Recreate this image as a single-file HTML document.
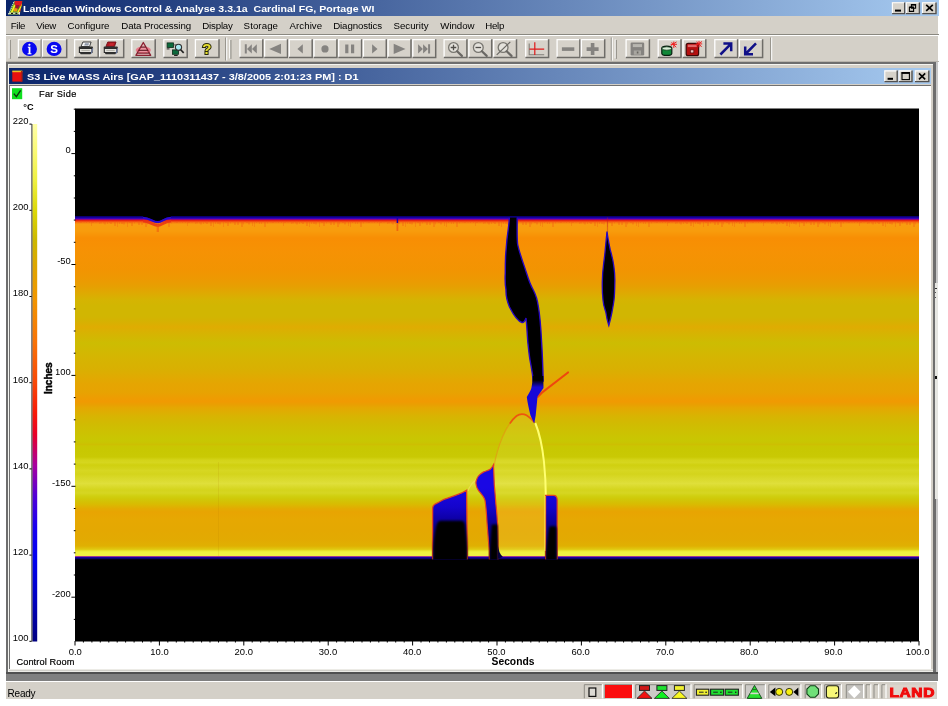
<!DOCTYPE html>
<html>
<head>
<meta charset="utf-8">
<title>Landscan Windows Control &amp; Analyse</title>
<style>
html,body{margin:0;padding:0;background:#fff;}
body{width:948px;height:706px;overflow:hidden;position:relative;font-family:"Liberation Sans",sans-serif;font-size:10px;color:#000;}
.abs{position:absolute;}
.r{position:absolute;}
#titlebar{position:absolute;left:6.2px;top:0;width:932.4px;height:15.6px;background:linear-gradient(90deg,#0a246a 0%,#a6caf0 100%);}
#titlebar .t{position:absolute;left:16.8px;top:2.3px;color:#fff;font-weight:bold;font-size:9.6px;line-height:13px;white-space:pre;transform-origin:0 0;transform:scaleX(1.1);will-change:transform;}
#menubar{will-change:transform;position:absolute;left:6.2px;top:15.6px;width:932.4px;height:46.8px;background:#d4d0c8;}
#menubar span{position:absolute;top:3px;line-height:13px;font-size:9.7px;white-space:nowrap;color:#000;}
#ctitle{position:absolute;left:8.8px;top:67.8px;width:921.8px;height:16.3px;background:linear-gradient(90deg,#0a246a 0%,#a6caf0 100%);}
#ctitle .t{position:absolute;left:17.9px;top:2.6px;color:#fff;font-weight:bold;font-size:9.6px;line-height:13px;white-space:pre;transform-origin:0 0;transform:scaleX(1.138);will-change:transform;}
#status{will-change:transform;position:absolute;left:6.2px;top:680.8px;width:930.8px;height:17.8px;background:#d4d0c8;border-top:1.2px solid #fff;box-sizing:border-box;}
</style>
</head>
<body>
<div id="page" style="position:absolute;left:0;top:0;width:948px;height:706px;filter:blur(0.35px);">
<div id="titlebar"><div class="t">Landscan Windows Control &amp; Analyse 3.3.1a  Cardinal FG, Portage WI</div></div>
<div id="menubar">
<span style="left:4.8px;letter-spacing:-0.36px">File</span>
<span style="left:30.3px;letter-spacing:-0.28px">View</span>
<span style="left:61.5px;letter-spacing:-0.00px">Configure</span>
<span style="left:115.3px;letter-spacing:-0.09px">Data Processing</span>
<span style="left:196.2px;letter-spacing:-0.17px">Display</span>
<span style="left:237.6px;letter-spacing:0.08px">Storage</span>
<span style="left:283.5px;letter-spacing:0.06px">Archive</span>
<span style="left:327.2px;letter-spacing:-0.11px">Diagnostics</span>
<span style="left:387.5px;letter-spacing:0.01px">Security</span>
<span style="left:434.3px;letter-spacing:-0.04px">Window</span>
<span style="left:479.2px;letter-spacing:-0.23px">Help</span>
</div>
<!-- toolbar separators -->
<div class="r" style="left:6.2px;top:34.2px;width:932.4px;height:1.1px;background:#8a8880"></div>
<div class="r" style="left:6.2px;top:35.3px;width:932.4px;height:1.1px;background:#fff"></div>
<!-- MDI child frame -->
<div class="r" style="left:6.2px;top:61.2px;width:932.4px;height:1.2px;background:#b8b4ac"></div>
<div class="r" style="left:6.2px;top:62.4px;width:931.6px;height:618.4px;background:#6e6e6e"></div>
<div class="r" style="left:7.8px;top:63.9px;width:925.2px;height:608.2px;background:#d4d0c8;border-top:1px solid #f4f4f0;border-left:1px solid #f4f4f0;box-sizing:border-box"></div>
<div class="r" style="left:936.4px;top:62.4px;width:1.6px;height:611px;background:#c8c8c8"></div>
<div class="r" style="left:6.2px;top:673.8px;width:931.8px;height:7px;background:#808080"></div>
<div class="r" style="left:6.2px;top:672px;width:931.8px;height:1.8px;background:#505050"></div>
<div class="r" style="left:934.8px;top:283px;width:3.2px;height:216px;background:#e6e6e2"></div>
<div class="r" style="left:934.8px;top:375.6px;width:2.3px;height:3.4px;background:#111"></div>
<div class="r" style="left:934.8px;top:288px;width:2px;height:1.4px;background:#333"></div>
<div class="r" style="left:934.8px;top:292px;width:1.6px;height:1.2px;background:#555"></div>
<div class="r" style="left:934.8px;top:297px;width:1.6px;height:1.2px;background:#555"></div>
<div id="ctitle"><div class="t">S3 Live MASS Airs [GAP_1110311437 - 3/8/2005 2:01:23 PM] : D1</div></div>
<div class="r" style="left:8.8px;top:85.4px;width:922.6px;height:583.4px;background:#fff;border-top:1.3px solid #707070;border-left:1.5px solid #707070;box-sizing:border-box"></div>
<div class="r" style="left:8.8px;top:668.6px;width:924px;height:3.4px;background:#ecebe6"></div>
<div class="r" style="left:8.8px;top:669.6px;width:924px;height:0.9px;background:#d2d0ca"></div>
<div id="status"><span class="abs" style="left:1.6px;top:5.2px;font-size:10px;line-height:13px;letter-spacing:-0.25px">Ready</span></div>

<svg id="chart" class="abs" style="left:0;top:0;" width="948" height="706" viewBox="0 0 948 706">
<defs>
<linearGradient id="band" x1="0" y1="215.6" x2="0" y2="559.8" gradientUnits="userSpaceOnUse">
<stop offset="0.0000" stop-color="#000000"/>
<stop offset="0.0029" stop-color="#0c0080"/>
<stop offset="0.0064" stop-color="#1a00a8"/>
<stop offset="0.0093" stop-color="#4800c0"/>
<stop offset="0.0116" stop-color="#a80870"/>
<stop offset="0.0139" stop-color="#e42010"/>
<stop offset="0.0174" stop-color="#f45010"/>
<stop offset="0.0209" stop-color="#f88410"/>
<stop offset="0.0259" stop-color="#f89c10"/>
<stop offset="0.0447" stop-color="#f89c0c"/>
<stop offset="0.0651" stop-color="#f88e04"/>
<stop offset="0.1058" stop-color="#f69204"/>
<stop offset="0.1580" stop-color="#f29402"/>
<stop offset="0.1813" stop-color="#ee9802"/>
<stop offset="0.2074" stop-color="#e6a002"/>
<stop offset="0.2307" stop-color="#dcac02"/>
<stop offset="0.2452" stop-color="#d5b402"/>
<stop offset="0.2626" stop-color="#d1b602"/>
<stop offset="0.2917" stop-color="#d1b602"/>
<stop offset="0.3062" stop-color="#d5b202"/>
<stop offset="0.3236" stop-color="#dfac02"/>
<stop offset="0.3382" stop-color="#d8b202"/>
<stop offset="0.3701" stop-color="#cdbc02"/>
<stop offset="0.3963" stop-color="#d2b802"/>
<stop offset="0.4195" stop-color="#d6b402"/>
<stop offset="0.4457" stop-color="#d9b002"/>
<stop offset="0.4689" stop-color="#e0aa02"/>
<stop offset="0.4893" stop-color="#e5a502"/>
<stop offset="0.5125" stop-color="#e7a302"/>
<stop offset="0.5314" stop-color="#ee9c02"/>
<stop offset="0.5401" stop-color="#f09a02"/>
<stop offset="0.5488" stop-color="#ea9f02"/>
<stop offset="0.5590" stop-color="#e4a802"/>
<stop offset="0.5822" stop-color="#d8b402"/>
<stop offset="0.6084" stop-color="#d0bc02"/>
<stop offset="0.6316" stop-color="#ccc202"/>
<stop offset="0.6549" stop-color="#c8c702"/>
<stop offset="0.6607" stop-color="#cac402"/>
<stop offset="0.6650" stop-color="#cdbf02"/>
<stop offset="0.6694" stop-color="#cac602"/>
<stop offset="0.6810" stop-color="#c8c802"/>
<stop offset="0.7013" stop-color="#c9c904"/>
<stop offset="0.7101" stop-color="#d4d418"/>
<stop offset="0.7173" stop-color="#d6d61e"/>
<stop offset="0.7246" stop-color="#d0d010"/>
<stop offset="0.7333" stop-color="#d3d318"/>
<stop offset="0.7406" stop-color="#d7d722"/>
<stop offset="0.7507" stop-color="#d4d41c"/>
<stop offset="0.7623" stop-color="#d9d92a"/>
<stop offset="0.7711" stop-color="#dcdc32"/>
<stop offset="0.7783" stop-color="#dfdf3a"/>
<stop offset="0.7870" stop-color="#dada2c"/>
<stop offset="0.7972" stop-color="#d4d41c"/>
<stop offset="0.8059" stop-color="#d6d622"/>
<stop offset="0.8146" stop-color="#d0d010"/>
<stop offset="0.8234" stop-color="#d0c808"/>
<stop offset="0.8379" stop-color="#d8bc02"/>
<stop offset="0.8524" stop-color="#e4aa02"/>
<stop offset="0.8611" stop-color="#e8a402"/>
<stop offset="0.8844" stop-color="#e6a802"/>
<stop offset="0.9134" stop-color="#e4a802"/>
<stop offset="0.9425" stop-color="#e2aa02"/>
<stop offset="0.9599" stop-color="#e0b002"/>
<stop offset="0.9695" stop-color="#e0c810"/>
<stop offset="0.9739" stop-color="#e8e430"/>
<stop offset="0.9773" stop-color="#f0f040"/>
<stop offset="0.9878" stop-color="#f0f044"/>
<stop offset="0.9904" stop-color="#a03890"/>
<stop offset="0.9933" stop-color="#1800a0"/>
<stop offset="0.9971" stop-color="#0c0060"/>
<stop offset="1.0000" stop-color="#000000"/>
</linearGradient>
<linearGradient id="tail" x1="0" y1="376" x2="0" y2="392" gradientUnits="userSpaceOnUse"><stop offset="0" stop-color="#000"/><stop offset="0.25" stop-color="#000"/><stop offset="0.7" stop-color="#1608d8"/></linearGradient>
<filter id="soft" x="-10%" y="-10%" width="120%" height="120%"><feGaussianBlur stdDeviation="0.9"/></filter>
<pattern id="teeth" x="75" y="221" width="96" height="16" patternUnits="userSpaceOnUse"><g fill="#f05010" opacity="0.3"><rect x="0" y="0" width="1" height="2.5"/><rect x="3" y="0" width="2" height="1.5"/><rect x="5" y="0" width="2" height="2"/><rect x="8" y="0" width="2" height="1.5"/><rect x="11" y="0" width="1" height="2"/><rect x="14" y="0" width="1" height="2"/><rect x="16" y="0" width="1" height="5"/><rect x="17" y="0" width="2" height="2"/><rect x="20" y="0" width="2" height="1.5"/><rect x="24" y="0" width="1" height="3"/><rect x="25" y="0" width="2" height="2.5"/><rect x="28" y="0" width="1" height="2.5"/><rect x="29" y="0" width="2" height="3.5"/><rect x="32" y="0" width="1" height="3"/><rect x="34" y="0" width="1" height="2"/><rect x="35" y="0" width="2" height="3"/><rect x="39" y="0" width="2" height="5"/><rect x="42" y="0" width="1" height="6"/><rect x="44" y="0" width="1" height="3"/><rect x="46" y="0" width="2" height="3"/><rect x="48" y="0" width="2" height="3.5"/><rect x="52" y="0" width="1" height="6"/><rect x="54" y="0" width="2" height="2"/><rect x="56" y="0" width="2" height="5"/><rect x="59" y="0" width="1" height="2.5"/><rect x="62" y="0" width="1" height="1.5"/><rect x="63" y="0" width="2" height="4"/><rect x="66" y="0" width="2" height="4"/><rect x="70" y="0" width="2" height="6"/><rect x="72" y="0" width="1" height="3.5"/><rect x="75" y="0" width="2" height="2"/><rect x="77" y="0" width="2" height="3.5"/><rect x="81" y="0" width="1" height="5"/><rect x="83" y="0" width="1" height="6"/><rect x="85" y="0" width="1" height="2"/><rect x="88" y="0" width="1" height="3"/><rect x="90" y="0" width="1" height="3"/><rect x="93" y="0" width="1" height="6"/><rect x="94" y="0" width="1" height="6"/></g></pattern>
<clipPath id="bandclip"><rect x="75" y="217.6" width="844" height="341.6"/></clipPath>
<linearGradient id="cbar" x1="0" y1="124" x2="0" y2="641.5" gradientUnits="userSpaceOnUse"><stop offset="0" stop-color="#ffffa8"/><stop offset="0.05" stop-color="#fafa78"/><stop offset="0.11" stop-color="#eef040"/><stop offset="0.167" stop-color="#dcd808"/><stop offset="0.225" stop-color="#ccb800"/><stop offset="0.28" stop-color="#e0a400"/><stop offset="0.333" stop-color="#f09800"/><stop offset="0.42" stop-color="#f87408"/><stop offset="0.5" stop-color="#f84808"/><stop offset="0.56" stop-color="#f81808"/><stop offset="0.6" stop-color="#e80028"/><stop offset="0.66" stop-color="#a800a0"/><stop offset="0.72" stop-color="#5000d8"/><stop offset="0.78" stop-color="#1800f0"/><stop offset="0.84" stop-color="#0000f0"/><stop offset="0.92" stop-color="#0000c0"/><stop offset="1" stop-color="#000080"/></linearGradient>
<linearGradient id="blk" x1="0" y1="488" x2="0" y2="526" gradientUnits="userSpaceOnUse"><stop offset="0" stop-color="#1a08e4"/><stop offset="0.5" stop-color="#1404cc"/><stop offset="0.8" stop-color="#0e00a8"/><stop offset="1" stop-color="#0a0090"/></linearGradient>
</defs>
<rect x="75" y="108.5" width="844" height="533" fill="#000"/>
<rect x="75" y="215.6" width="844" height="344.2" fill="url(#band)"/>
<rect x="75" y="221" width="844" height="7.5" fill="url(#teeth)"/>
<g id="notch">
<path d="M143,221 C150,221 152.5,225.4 157.8,225.4 C162.5,225.4 164,221 171,221" fill="none" stroke="#e83014" stroke-width="3" opacity="0.8"/>
<path d="M157.8,225 V232" stroke="#f05810" stroke-width="2.4" opacity="0.55"/>
<path d="M143,215 H171 V217 C164,217 162.5,221.4 157.8,221.4 C152.5,221.4 150,217 143,217 Z" fill="#000"/>
<path d="M143,217.8 C150,217.8 152.5,222.2 157.8,222.2 C162.5,222.2 164,217.8 171,217.8" fill="none" stroke="#2808d0" stroke-width="2.2"/>
</g>
<path d="M218.5,462V556" stroke="#b07800" stroke-width="1" opacity="0.12"/>
<!--SHAPES-->
<g id="shapes" clip-path="url(#bandclip)">
<!-- notch near x=158 and hairlines -->
<path d="M397.4,222 L397.4,231" stroke="#e84010" stroke-width="1.8" opacity="0.55"/><path d="M397.4,217 L397.4,223" stroke="#1c00a8" stroke-width="1.5"/>
<path d="M607.5,217 L607.5,232" stroke="#c02020" stroke-width="1.2" opacity="0.4"/>
<!-- dome -->
<path d="M493.5,466 C495,456 498,446 501,439 C505,430 510,421 516,416.5 C520,413.6 524,413.5 527,415.5 C530,417.5 532,419.5 535,423 C539,432 542.5,448 544,462 C545.3,475 545.8,485 545.8,495 L545.8,551 L498,551 C497.3,525 496.5,510 496,500 C495.3,488 494.3,476 493.5,466 Z" fill="#fff8a0" opacity="0.10"/>
<path d="M534.5,422.5 C531,418.5 528.5,416.5 526.5,415.3 C523,413.4 519.5,413.8 516.5,416 C514,418 511.8,420.6 509.8,423.6" fill="none" stroke="#f04a10" stroke-width="1.7" opacity="0.9"/>
<path d="M509.8,423.6 C507,427.6 504.6,432 502.5,437 C499,445 496,455 494,466" fill="none" stroke="#f07010" stroke-width="1.2" opacity="0.4"/>
<path d="M535.3,423 C539,432 542.5,448 544,462 C545.3,475 545.8,485 545.8,496" fill="none" stroke="#ffff70" stroke-width="2"/>
<!-- faint second dome outline -->
<path d="M468,491 C469.5,486 472.5,482.5 476.5,479.5" fill="none" stroke="#f0e060" stroke-width="1.2" opacity="0.7"/>
<!-- red streak -->
<path d="M568,372.5 L541.5,393 L537.8,396.8" fill="none" stroke="#f03c10" stroke-width="2.2" stroke-linecap="round" opacity="0.9"/>
<!-- blob 1 black -->
<path d="M509.5,215 L517.2,215 C517.2,228 516.8,238 517.6,244 C519,252 524,265 526.5,273 C529,281 531,286 533.3,290 C536,295 537.6,301 538.4,307 C540,316 541,330 541.6,342 C542.3,353 542.8,366 543.2,381 L533.2,381 C532.5,372 531,366 530,360 C529,354 528.5,348 527.8,342 C527.2,334 526.8,325 526,318 C525,321 523.5,322.8 522,322.5 C518,321.5 513,314 509.5,307 C507,301 505.8,296 506,290 C505,284 505,278 505.3,273 C505.3,267 505.4,261 505.6,256 C506,250 506.6,244 507,239 C508,231 509.2,224 509.5,215 Z" fill="#000" stroke="#2808c0" stroke-width="1.4"/>
<!-- blob 1 blue tail -->
<path d="M532.8,376 L543.3,376 L543.5,388 L537.5,396.5 C537,403 536.2,410 535.7,415.5 L534.2,423.5 L530.5,415.5 C529,409 527.5,403 526.8,397 C529,393 531,390 531.4,388 C532,385 532.5,381 532.8,376 Z" fill="url(#tail)"/>
<!-- lens -->
<path d="M607,231.5 C607.8,238 609,244 610.3,250 C612,256 613.2,261 613.8,266 C614.8,273 615,278 614.8,283 C614.7,290 614.6,295 614,300 C613.2,306 612.5,309 612,312 C611,317 609.8,322 608.8,325.5 C607.6,322 606.5,317 605.8,312 C604.5,308 603.3,305 603,300 C602.3,294 602.2,288 602.3,282 C602.4,276 602.8,270 603.5,265 C604.2,259 604.8,255 605.2,250 C605.8,244 606.4,238 607,231.5 Z" fill="#000" stroke="#2808c0" stroke-width="1.3"/>
<!-- block A -->
<path d="M432.6,563 L432.6,509 C432.6,505.5 434,504.3 436,503.6 C440,501.6 442,500.2 444,499.3 C448,497.8 452,496.6 456,495.2 C460,493.8 464,492 466.6,490.2 L467.4,563 Z" fill="url(#blk)" stroke="#e04028" stroke-width="1.3"/>
<path d="M433.2,563 L433.2,548 C433.6,540 435,530 436.6,525 C437.4,522 438.6,520.8 441,520.8 L461,520.8 C463.4,520.8 464.6,522 465,525 C466,532 466.8,540 467.2,548 L467.2,563 Z" fill="#000" filter="url(#soft)"/>
<!-- block B -->
<path d="M493.5,464.8 C492,467.6 491,468.8 490,469.4 C487.5,470.6 486,471 484.3,471.6 C482.6,472.4 481.4,473.2 480,474.4 C478.4,475.8 477.4,477.2 476.9,478.8 C476.2,480.4 475.9,481.6 475.9,483 C476,484.6 476.4,486 476.9,487.4 C477.8,489.4 478.8,491 480,492.4 C481.2,494 482.4,495.4 483.4,496.8 C484.2,498 484.7,499.2 485,500.5 C486,507 486.6,515 487,522.7 C487.5,529 488,535 488.4,540.8 L489.3,550.8 L489.4,563 L498,563 L498,540.8 C497.9,534 497.7,528 497.5,522.7 C497,515 496.5,509 495.9,504 L495.2,495 L494.3,485 Z" fill="url(#blk)" stroke="#e04028" stroke-width="1.2"/>
<path d="M491.8,524.6 L497.5,524.6 L498,548 L498,563 L489.5,563 L489.7,552 L490.3,541 L491,532 Z" fill="#000" filter="url(#soft)"/>
<path d="M497.8,545 C498.6,550.5 500,554.6 502.8,556.8 L497.8,559 Z" fill="#06023c"/>
<!-- block C -->
<path d="M545.6,563 L545.6,495.3 L553.4,495.3 C556,495.3 557.2,497.4 557.2,500 L557.2,563 Z" fill="url(#blk)" stroke="#e04028" stroke-width="1.2"/>
<path d="M546,563 L546,552 C546.6,545 547.6,536 548.6,530 C549,527.2 549.6,526.2 551,526.2 L554.6,526.2 C556,526.2 556.6,527.2 556.6,530 L556.8,563 Z" fill="#000" filter="url(#soft)"/>
<path d="M545,496 L544.8,551" stroke="#f8f060" stroke-width="1.2" opacity="0.75"/>
</g>
<!--/SHAPES-->
<!--AXES-->
<g id="axes" font-family="Liberation Sans, sans-serif" font-size="9.45" fill="#000">
<rect x="32.4" y="124" width="4.8" height="517.5" fill="url(#cbar)"/>
<rect x="31.4" y="124" width="1" height="517.5" fill="#303030"/>
<rect x="29.4" y="123.6" width="2.2" height="1" fill="#000"/>
<text x="28.6" y="124.0" text-anchor="end">220</text>
<rect x="29.4" y="209.8" width="2.2" height="1" fill="#000"/>
<text x="28.6" y="210.2" text-anchor="end">200</text>
<rect x="29.4" y="296.0" width="2.2" height="1" fill="#000"/>
<text x="28.6" y="296.4" text-anchor="end">180</text>
<rect x="29.4" y="382.2" width="2.2" height="1" fill="#000"/>
<text x="28.6" y="382.6" text-anchor="end">160</text>
<rect x="29.4" y="468.4" width="2.2" height="1" fill="#000"/>
<text x="28.6" y="468.8" text-anchor="end">140</text>
<rect x="29.4" y="554.6" width="2.2" height="1" fill="#000"/>
<text x="28.6" y="555.0" text-anchor="end">120</text>
<rect x="29.4" y="640.8" width="2.2" height="1" fill="#000"/>
<text x="28.6" y="641.2" text-anchor="end">100</text>
<path d="M73.8,109.2H75.5M73.8,131.4H75.5M71.4,153.6H75.5M73.8,175.8H75.5M73.8,198.0H75.5M73.8,220.1H75.5M73.8,242.3H75.5M71.4,264.5H75.5M73.8,286.7H75.5M73.8,308.9H75.5M73.8,331.0H75.5M73.8,353.2H75.5M71.4,375.4H75.5M73.8,397.6H75.5M73.8,419.8H75.5M73.8,441.9H75.5M73.8,464.1H75.5M71.4,486.3H75.5M73.8,508.5H75.5M73.8,530.7H75.5M73.8,552.8H75.5M73.8,575.0H75.5M71.4,597.2H75.5M73.8,619.4H75.5" stroke="#000" stroke-width="1" fill="none"/>
<text x="70.8" y="153.4" text-anchor="end">0</text>
<text x="70.8" y="264.3" text-anchor="end">-50</text>
<text x="70.8" y="375.2" text-anchor="end">-100</text>
<text x="70.8" y="486.1" text-anchor="end">-150</text>
<text x="70.8" y="597.0" text-anchor="end">-200</text>
<path d="M74.5,641H75.5V645.4H74.5ZM82.9,641H83.9V642.5H82.9ZM91.4,641H92.4V642.5H91.4ZM99.8,641H100.8V642.5H99.8ZM108.3,641H109.3V642.5H108.3ZM116.7,641H117.7V642.5H116.7ZM125.1,641H126.1V642.5H125.1ZM133.6,641H134.6V642.5H133.6ZM142.0,641H143.0V642.5H142.0ZM150.5,641H151.5V642.5H150.5ZM158.9,641H159.9V645.4H158.9ZM167.3,641H168.3V642.5H167.3ZM175.8,641H176.8V642.5H175.8ZM184.2,641H185.2V642.5H184.2ZM192.7,641H193.7V642.5H192.7ZM201.1,641H202.1V642.5H201.1ZM209.5,641H210.5V642.5H209.5ZM218.0,641H219.0V642.5H218.0ZM226.4,641H227.4V642.5H226.4ZM234.9,641H235.9V642.5H234.9ZM243.3,641H244.3V645.4H243.3ZM251.7,641H252.7V642.5H251.7ZM260.2,641H261.2V642.5H260.2ZM268.6,641H269.6V642.5H268.6ZM277.1,641H278.1V642.5H277.1ZM285.5,641H286.5V642.5H285.5ZM293.9,641H294.9V642.5H293.9ZM302.4,641H303.4V642.5H302.4ZM310.8,641H311.8V642.5H310.8ZM319.3,641H320.3V642.5H319.3ZM327.7,641H328.7V645.4H327.7ZM336.1,641H337.1V642.5H336.1ZM344.6,641H345.6V642.5H344.6ZM353.0,641H354.0V642.5H353.0ZM361.5,641H362.5V642.5H361.5ZM369.9,641H370.9V642.5H369.9ZM378.3,641H379.3V642.5H378.3ZM386.8,641H387.8V642.5H386.8ZM395.2,641H396.2V642.5H395.2ZM403.7,641H404.7V642.5H403.7ZM412.1,641H413.1V645.4H412.1ZM420.5,641H421.5V642.5H420.5ZM429.0,641H430.0V642.5H429.0ZM437.4,641H438.4V642.5H437.4ZM445.9,641H446.9V642.5H445.9ZM454.3,641H455.3V642.5H454.3ZM462.7,641H463.7V642.5H462.7ZM471.2,641H472.2V642.5H471.2ZM479.6,641H480.6V642.5H479.6ZM488.1,641H489.1V642.5H488.1ZM496.5,641H497.5V645.4H496.5ZM504.9,641H505.9V642.5H504.9ZM513.4,641H514.4V642.5H513.4ZM521.8,641H522.8V642.5H521.8ZM530.3,641H531.3V642.5H530.3ZM538.7,641H539.7V642.5H538.7ZM547.1,641H548.1V642.5H547.1ZM555.6,641H556.6V642.5H555.6ZM564.0,641H565.0V642.5H564.0ZM572.5,641H573.5V642.5H572.5ZM580.9,641H581.9V645.4H580.9ZM589.3,641H590.3V642.5H589.3ZM597.8,641H598.8V642.5H597.8ZM606.2,641H607.2V642.5H606.2ZM614.7,641H615.7V642.5H614.7ZM623.1,641H624.1V642.5H623.1ZM631.5,641H632.5V642.5H631.5ZM640.0,641H641.0V642.5H640.0ZM648.4,641H649.4V642.5H648.4ZM656.9,641H657.9V642.5H656.9ZM665.3,641H666.3V645.4H665.3ZM673.7,641H674.7V642.5H673.7ZM682.2,641H683.2V642.5H682.2ZM690.6,641H691.6V642.5H690.6ZM699.1,641H700.1V642.5H699.1ZM707.5,641H708.5V642.5H707.5ZM715.9,641H716.9V642.5H715.9ZM724.4,641H725.4V642.5H724.4ZM732.8,641H733.8V642.5H732.8ZM741.3,641H742.3V642.5H741.3ZM749.7,641H750.7V645.4H749.7ZM758.1,641H759.1V642.5H758.1ZM766.6,641H767.6V642.5H766.6ZM775.0,641H776.0V642.5H775.0ZM783.5,641H784.5V642.5H783.5ZM791.9,641H792.9V642.5H791.9ZM800.3,641H801.3V642.5H800.3ZM808.8,641H809.8V642.5H808.8ZM817.2,641H818.2V642.5H817.2ZM825.7,641H826.7V642.5H825.7ZM834.1,641H835.1V645.4H834.1ZM842.5,641H843.5V642.5H842.5ZM851.0,641H852.0V642.5H851.0ZM859.4,641H860.4V642.5H859.4ZM867.9,641H868.9V642.5H867.9ZM876.3,641H877.3V642.5H876.3ZM884.7,641H885.7V642.5H884.7ZM893.2,641H894.2V642.5H893.2ZM901.6,641H902.6V642.5H901.6ZM910.1,641H911.1V642.5H910.1ZM918.5,641H919.5V645.4H918.5Z" fill="#000"/>
<text x="75.3" y="654.7" text-anchor="middle">0.0</text>
<text x="159.5" y="654.7" text-anchor="middle">10.0</text>
<text x="243.8" y="654.7" text-anchor="middle">20.0</text>
<text x="328.0" y="654.7" text-anchor="middle">30.0</text>
<text x="412.2" y="654.7" text-anchor="middle">40.0</text>
<text x="496.4" y="654.7" text-anchor="middle">50.0</text>
<text x="580.7" y="654.7" text-anchor="middle">60.0</text>
<text x="664.9" y="654.7" text-anchor="middle">70.0</text>
<text x="749.1" y="654.7" text-anchor="middle">80.0</text>
<text x="833.4" y="654.7" text-anchor="middle">90.0</text>
<text x="917.6" y="654.7" text-anchor="middle">100.0</text>
<text x="513" y="665.2" text-anchor="middle" font-weight="bold" font-size="10.3">Seconds</text>
<rect x="43" y="361" width="12.8" height="34" fill="#fff"/>
<text transform="translate(51.7,378.2) rotate(-90)" text-anchor="middle" font-weight="bold" font-size="10" stroke="#000" stroke-width="0.45">Inches</text>
<text x="23.3" y="109.7" font-weight="bold" font-size="9.2">°C</text>
<text x="38.9" y="96.6" font-size="9.2" letter-spacing="0.38" stroke="#000" stroke-width="0.2">Far Side</text>
<text x="16.4" y="664.6" font-size="9.2" letter-spacing="0.12" stroke="#000" stroke-width="0.2">Control Room</text>
</g>
<!--/AXES-->
<!--TOOLBAR-->
<g id="toolbar" font-family="Liberation Sans, sans-serif">
<rect x="8.6" y="39.5" width="1.2" height="18.9" fill="#fff"/><rect x="9.8" y="40.0" width="1" height="18.9" fill="#8a8880"/>
<rect x="17.8" y="39.0" width="24.3" height="19.2" fill="#d6d2ca"/><path d="M18.4,57.6V39.6H41.5" fill="none" stroke="#fff" stroke-width="1.3"/><path d="M41.4,39.3V57.5H18.1" fill="none" stroke="#6e6c68" stroke-width="1.5"/>
<rect x="41.8" y="39.0" width="25.6" height="19.2" fill="#d6d2ca"/><path d="M42.4,57.6V39.6H66.8" fill="none" stroke="#fff" stroke-width="1.3"/><path d="M66.7,39.3V57.5H42.1" fill="none" stroke="#6e6c68" stroke-width="1.5"/>
<rect x="74.0" y="39.0" width="24.9" height="19.2" fill="#d6d2ca"/><path d="M74.6,57.6V39.6H98.3" fill="none" stroke="#fff" stroke-width="1.3"/><path d="M98.2,39.3V57.5H74.3" fill="none" stroke="#6e6c68" stroke-width="1.5"/>
<rect x="99.0" y="39.0" width="25.4" height="19.2" fill="#d6d2ca"/><path d="M99.6,57.6V39.6H123.8" fill="none" stroke="#fff" stroke-width="1.3"/><path d="M123.7,39.3V57.5H99.3" fill="none" stroke="#6e6c68" stroke-width="1.5"/>
<rect x="131.2" y="39.0" width="24.7" height="19.2" fill="#d6d2ca"/><path d="M131.8,57.6V39.6H155.3" fill="none" stroke="#fff" stroke-width="1.3"/><path d="M155.2,39.3V57.5H131.5" fill="none" stroke="#6e6c68" stroke-width="1.5"/>
<rect x="163.2" y="39.0" width="24.7" height="19.2" fill="#d6d2ca"/><path d="M163.8,57.6V39.6H187.3" fill="none" stroke="#fff" stroke-width="1.3"/><path d="M187.2,39.3V57.5H163.5" fill="none" stroke="#6e6c68" stroke-width="1.5"/>
<rect x="194.8" y="39.0" width="24.9" height="19.2" fill="#d6d2ca"/><path d="M195.4,57.6V39.6H219.1" fill="none" stroke="#fff" stroke-width="1.3"/><path d="M219.0,39.3V57.5H195.1" fill="none" stroke="#6e6c68" stroke-width="1.5"/>
<rect x="225.2" y="37.5" width="1" height="23.0" fill="#8a8880"/><rect x="226.2" y="37.5" width="1" height="23.0" fill="#fff"/>
<rect x="229.2" y="39.5" width="1.2" height="18.9" fill="#fff"/><rect x="230.4" y="40.0" width="1" height="18.9" fill="#8a8880"/>
<rect x="239.3" y="39.0" width="24.2" height="19.2" fill="#d6d2ca"/><path d="M239.9,57.6V39.6H262.9" fill="none" stroke="#fff" stroke-width="1.3"/><path d="M262.8,39.3V57.5H239.6" fill="none" stroke="#6e6c68" stroke-width="1.5"/>
<rect x="264.0" y="39.0" width="24.2" height="19.2" fill="#d6d2ca"/><path d="M264.6,57.6V39.6H287.6" fill="none" stroke="#fff" stroke-width="1.3"/><path d="M287.5,39.3V57.5H264.3" fill="none" stroke="#6e6c68" stroke-width="1.5"/>
<rect x="288.7" y="39.0" width="24.2" height="19.2" fill="#d6d2ca"/><path d="M289.3,57.6V39.6H312.3" fill="none" stroke="#fff" stroke-width="1.3"/><path d="M312.2,39.3V57.5H289.0" fill="none" stroke="#6e6c68" stroke-width="1.5"/>
<rect x="313.4" y="39.0" width="24.2" height="19.2" fill="#d6d2ca"/><path d="M314.0,57.6V39.6H337.0" fill="none" stroke="#fff" stroke-width="1.3"/><path d="M336.9,39.3V57.5H313.7" fill="none" stroke="#6e6c68" stroke-width="1.5"/>
<rect x="338.1" y="39.0" width="24.2" height="19.2" fill="#d6d2ca"/><path d="M338.7,57.6V39.6H361.7" fill="none" stroke="#fff" stroke-width="1.3"/><path d="M361.6,39.3V57.5H338.4" fill="none" stroke="#6e6c68" stroke-width="1.5"/>
<rect x="362.8" y="39.0" width="24.2" height="19.2" fill="#d6d2ca"/><path d="M363.4,57.6V39.6H386.4" fill="none" stroke="#fff" stroke-width="1.3"/><path d="M386.3,39.3V57.5H363.1" fill="none" stroke="#6e6c68" stroke-width="1.5"/>
<rect x="387.5" y="39.0" width="24.2" height="19.2" fill="#d6d2ca"/><path d="M388.1,57.6V39.6H411.1" fill="none" stroke="#fff" stroke-width="1.3"/><path d="M411.0,39.3V57.5H387.8" fill="none" stroke="#6e6c68" stroke-width="1.5"/>
<rect x="412.2" y="39.0" width="24.2" height="19.2" fill="#d6d2ca"/><path d="M412.8,57.6V39.6H435.8" fill="none" stroke="#fff" stroke-width="1.3"/><path d="M435.7,39.3V57.5H412.5" fill="none" stroke="#6e6c68" stroke-width="1.5"/>
<rect x="443.5" y="39.0" width="24.1" height="19.2" fill="#d6d2ca"/><path d="M444.1,57.6V39.6H467.0" fill="none" stroke="#fff" stroke-width="1.3"/><path d="M466.9,39.3V57.5H443.8" fill="none" stroke="#6e6c68" stroke-width="1.5"/>
<rect x="468.3" y="39.0" width="24.1" height="19.2" fill="#d6d2ca"/><path d="M468.9,57.6V39.6H491.8" fill="none" stroke="#fff" stroke-width="1.3"/><path d="M491.7,39.3V57.5H468.6" fill="none" stroke="#6e6c68" stroke-width="1.5"/>
<rect x="493.1" y="39.0" width="24.1" height="19.2" fill="#d6d2ca"/><path d="M493.7,57.6V39.6H516.6" fill="none" stroke="#fff" stroke-width="1.3"/><path d="M516.5,39.3V57.5H493.4" fill="none" stroke="#6e6c68" stroke-width="1.5"/>
<rect x="525.1" y="39.0" width="24.2" height="19.2" fill="#d6d2ca"/><path d="M525.7,57.6V39.6H548.7" fill="none" stroke="#fff" stroke-width="1.3"/><path d="M548.6,39.3V57.5H525.4" fill="none" stroke="#6e6c68" stroke-width="1.5"/>
<rect x="556.5" y="39.0" width="24.1" height="19.2" fill="#d6d2ca"/><path d="M557.1,57.6V39.6H580.0" fill="none" stroke="#fff" stroke-width="1.3"/><path d="M579.9,39.3V57.5H556.8" fill="none" stroke="#6e6c68" stroke-width="1.5"/>
<rect x="580.8" y="39.0" width="24.6" height="19.2" fill="#d6d2ca"/><path d="M581.4,57.6V39.6H604.8" fill="none" stroke="#fff" stroke-width="1.3"/><path d="M604.7,39.3V57.5H581.1" fill="none" stroke="#6e6c68" stroke-width="1.5"/>
<rect x="610.8" y="37.5" width="1" height="23.0" fill="#8a8880"/><rect x="611.8" y="37.5" width="1" height="23.0" fill="#fff"/>
<rect x="614.6" y="39.5" width="1.2" height="18.9" fill="#fff"/><rect x="615.8" y="40.0" width="1" height="18.9" fill="#8a8880"/>
<rect x="625.5" y="39.0" width="24.6" height="19.2" fill="#d6d2ca"/><path d="M626.1,57.6V39.6H649.5" fill="none" stroke="#fff" stroke-width="1.3"/><path d="M649.4,39.3V57.5H625.8" fill="none" stroke="#6e6c68" stroke-width="1.5"/>
<rect x="657.6" y="39.0" width="24.1" height="19.2" fill="#d6d2ca"/><path d="M658.2,57.6V39.6H681.1" fill="none" stroke="#fff" stroke-width="1.3"/><path d="M681.0,39.3V57.5H657.9" fill="none" stroke="#6e6c68" stroke-width="1.5"/>
<rect x="682.4" y="39.0" width="24.1" height="19.2" fill="#d6d2ca"/><path d="M683.0,57.6V39.6H705.9" fill="none" stroke="#fff" stroke-width="1.3"/><path d="M705.8,39.3V57.5H682.7" fill="none" stroke="#6e6c68" stroke-width="1.5"/>
<rect x="714.2" y="39.0" width="24.1" height="19.2" fill="#d6d2ca"/><path d="M714.8,57.6V39.6H737.7" fill="none" stroke="#fff" stroke-width="1.3"/><path d="M737.6,39.3V57.5H714.5" fill="none" stroke="#6e6c68" stroke-width="1.5"/>
<rect x="738.8" y="39.0" width="24.5" height="19.2" fill="#d6d2ca"/><path d="M739.4,57.6V39.6H762.7" fill="none" stroke="#fff" stroke-width="1.3"/><path d="M762.6,39.3V57.5H739.1" fill="none" stroke="#6e6c68" stroke-width="1.5"/>
<rect x="770.2" y="37.5" width="1" height="23.0" fill="#8a8880"/><rect x="771.2" y="37.5" width="1" height="23.0" fill="#fff"/>
<ellipse cx="29.5" cy="48.9" rx="7.5" ry="7.1" fill="#0808f0"/>
<text x="29.5" y="53.5" text-anchor="middle" font-family="Liberation Serif, serif" font-size="14.5" fill="#fff" stroke="#fff" stroke-width="0.35">i</text>
<ellipse cx="54.1" cy="48.9" rx="7.5" ry="7.1" fill="#0808f0"/>
<text x="54.1" y="53.0" text-anchor="middle" font-weight="bold" font-size="11.5" fill="#fff">S</text>
<g transform="translate(85.8,48.9)"><path d="M-2.9,-6.9H5.3L3.8,-2.4H-4.8Z" fill="#f4f4f4" stroke="#303030" stroke-width="0.9"/><path d="M-0.8,-5.6H3.2L2.6,-3.4H-1.6Z" fill="#9098a8"/><path d="M-6.4,-0.4V3.6H6.2V-0.4Z" fill="#e4e2dc" stroke="#282828" stroke-width="1.1"/><rect x="-7.1" y="-2.4" width="14.3" height="2" rx="1" fill="#303030"/><rect x="-5.6" y="3.3" width="10.8" height="2" rx="0.8" fill="#303030"/><path d="M-4.4,1.5H4" stroke="#a8a8a0" stroke-width="0.9"/><path d="M7,-0.6L5.4,4.6" stroke="#6a78a0" stroke-width="1.1"/></g>
<g transform="translate(110.7,48.9)"><path d="M-2.9,-6.9H5.3L3.8,-2.4H-4.8Z" fill="#b01820" stroke="#701018" stroke-width="0.9"/><path d="M-0.8,-5.6H3.2L2.6,-3.4H-1.6Z" fill="#c82830"/><path d="M-6.4,-0.4V3.6H6.2V-0.4Z" fill="#e4e2dc" stroke="#282828" stroke-width="1.1"/><rect x="-7.1" y="-2.4" width="14.3" height="2" rx="1" fill="#303030"/><rect x="-5.6" y="3.3" width="10.8" height="2" rx="0.8" fill="#303030"/><path d="M-4.4,1.5H4" stroke="#a8a8a0" stroke-width="0.9"/><path d="M7,-0.6L5.4,4.6" stroke="#6a78a0" stroke-width="1.1"/></g>
<g transform="translate(143.3,48.9)"><ellipse cx="0" cy="1.2" rx="7.6" ry="3.7" fill="#e87c8c"/><path d="M0,-6.4L7.4,6.4H-7.4Z" fill="#f0a8b0" fill-opacity="0.55" stroke="#8c2030" stroke-width="1.3" stroke-linejoin="round"/><path d="M-2.4,-1.8H2.4M-4.6,1.4H4.6M-5.8,4.2H5.8" stroke="#501018" stroke-width="1"/><path d="M-5.6,2.4C-3,4.6 3,4.6 5.6,2.4" fill="none" stroke="#c04858" stroke-width="0.9"/></g>
<g transform="translate(175.1,48.9)"><rect x="-8" y="-6" width="6.4" height="4.6" fill="#0c6a3c" stroke="#0c2818" stroke-width="0.8"/><rect x="-2.6" y="1" width="6" height="4.4" fill="#0c6a3c" stroke="#0c2818" stroke-width="0.8"/><path d="M-8.4,0H-5.6M-1,6.6H2.6" stroke="#202020" stroke-width="1"/><path d="M-1.6,-4H1.5V0.8" fill="none" stroke="#404040" stroke-width="0.8"/><circle cx="3.4" cy="-1.6" r="3.1" fill="#a8e8f0" stroke="#303030" stroke-width="1.1"/><path d="M5.6,0.8L8.6,4" stroke="#202020" stroke-width="1.6"/></g>
<text x="206.8" y="54.2" text-anchor="middle" font-weight="bold" font-size="15" fill="#e8e030" stroke="#282808" stroke-width="2" paint-order="stroke">?</text>
<path transform="translate(251.0,48.9)" d="M-6.2,-4.6h2v9.2h-2zM-4,0L0.8,-4.6V4.6ZM1,0L5.8,-4.6V4.6Z" fill="#858380"/>
<path transform="translate(275.6,48.9)" d="M-6.4,0L5.4,-5.2V5.2Z" fill="#858380"/>
<path transform="translate(300.4,48.9)" d="M-3,0L2.4,-4.6V4.6Z" fill="#858380"/>
<circle cx="325.0" cy="48.9" r="3.6" fill="#858380"/>
<path transform="translate(349.8,48.9)" d="M-4.6,-4.4h3.2v8.8h-3.2zM1.2,-4.4h3.2v8.8h-3.2z" fill="#858380"/>
<path transform="translate(374.5,48.9)" d="M3,0L-2.4,-4.6V4.6Z" fill="#858380"/>
<path transform="translate(399.1,48.9)" d="M6.4,0L-5.4,-5.2V5.2Z" fill="#858380"/>
<path transform="translate(423.9,48.9)" d="M6.2,-4.6h-2v9.2h2zM4,0L-0.8,-4.6V4.6ZM-1,0L-5.8,-4.6V4.6Z" fill="#858380"/>
<g transform="translate(455.1,48.9)"><circle cx="-1.6" cy="-1.4" r="4.9" fill="#e4e2dc" stroke="#787670" stroke-width="1.3"/><path d="M2,2.4L6.8,7" stroke="#6a6864" stroke-width="2.2" stroke-linecap="round"/><path d="M-4.4,-1.4H1.2M-1.6,-4.2V1.4" stroke="#504e4a" stroke-width="1.3"/></g>
<g transform="translate(479.9,48.9)"><circle cx="-1.6" cy="-1.4" r="4.9" fill="#e4e2dc" stroke="#787670" stroke-width="1.3"/><path d="M2,2.4L6.8,7" stroke="#6a6864" stroke-width="2.2" stroke-linecap="round"/><path d="M-4.4,-1.4H1.2" stroke="#504e4a" stroke-width="1.3"/></g>
<g transform="translate(504.7,48.9)"><circle cx="-1.6" cy="-1.4" r="4.9" fill="#e4e2dc" stroke="#787670" stroke-width="1.3"/><path d="M2,2.4L6.8,7" stroke="#6a6864" stroke-width="2.2" stroke-linecap="round"/><path d="M-8,6L5.6,-7" stroke="#6a6864" stroke-width="1.2"/></g>
<g transform="translate(536.8,48.9)"><path d="M-7.6,-5.4V6.4M-7.6,5.8H7.4" stroke="#807e78" stroke-width="1.1" fill="none"/><path d="M-2,-6.6V6.2M-7.4,0.2H7.4" stroke="#e01818" stroke-width="1.2" fill="none"/></g>
<rect x="561.9" y="47.3" width="12.4" height="3.6" fill="#858380"/>
<path transform="translate(592.6,49.1)" d="M-6,-1.8H-1.8V-6H1.8V-1.8H6V1.8H1.8V6H-1.8V1.8H-6Z" fill="#858380"/>
<g transform="translate(637.4,48.9)"><rect x="-6.8" y="-6.4" width="13.6" height="13" rx="1.2" fill="#858380"/><rect x="-4.6" y="-4.8" width="9.2" height="3" fill="#b8b6b0"/><rect x="-3.6" y="1.6" width="7.2" height="4.2" fill="#a8a6a0"/><rect x="-0.6" y="2.6" width="1.6" height="2" fill="#686660"/></g>
<g transform="translate(669.2,48.9)"><path d="M-7.4,-0.6C-7.4,-3.4 2.6,-3.4 2.6,-0.6V4.6C2.6,7.2 -7.4,7.2 -7.4,4.6Z" fill="#108838" stroke="#082010" stroke-width="1.2"/><ellipse cx="-2.4" cy="-0.4" rx="4.6" ry="1.7" fill="#d8f0d8" stroke="#103018" stroke-width="0.7"/><path d="M1.6,-3.4L7.4,-7M2.4,-6.6L7,-1.6M4.6,-7.4V-1M1.4,-4.6H7.8" stroke="#f02020" stroke-width="1"/></g>
<g transform="translate(694.0,48.9)"><rect x="-7.8" y="-5.6" width="12.4" height="12.4" rx="2" fill="#b41010" stroke="#400808" stroke-width="1.2"/><rect x="-6.2" y="-4.2" width="9" height="2.4" fill="#e06868"/><rect x="-3.6" y="1" width="3.4" height="3" fill="#f0c0c0" stroke="#500808" stroke-width="0.6"/><path d="M2,-3.6L8,-7.4M2.8,-7.4L7.6,-2M5,-8V-1.6M1.8,-5H8.2" stroke="#f02020" stroke-width="1"/></g>
<path transform="translate(725.8,48.9)" d="M-5.4,5.6L4.6,-4.6M-2.4,-5.4H5.4V2.4" fill="none" stroke="#101088" stroke-width="2.5"/>
<path transform="translate(750.6,48.9)" d="M5.4,-5.6L-4.6,4.6M2.4,5.4H-5.4V-2.4" fill="none" stroke="#101088" stroke-width="2.5"/>
</g>
<!--/TOOLBAR-->
<!--CHROME-->
<g id="chrome">
<rect x="891.9" y="2.2" width="13.4" height="12.0" fill="#d6d2ca"/><path d="M892.4,13.6V2.7H904.7" fill="none" stroke="#fff" stroke-width="1.1"/><path d="M904.7,2.4V13.6H892.1" fill="none" stroke="#505050" stroke-width="1.4"/>
<rect x="905.8" y="2.2" width="14.2" height="12.0" fill="#d6d2ca"/><path d="M906.3,13.6V2.7H919.4" fill="none" stroke="#fff" stroke-width="1.1"/><path d="M919.4,2.4V13.6H906.0" fill="none" stroke="#505050" stroke-width="1.4"/>
<rect x="922.0" y="2.2" width="14.6" height="12.0" fill="#d6d2ca"/><path d="M922.5,13.6V2.7H936.0" fill="none" stroke="#fff" stroke-width="1.1"/><path d="M936.0,2.4V13.6H922.2" fill="none" stroke="#505050" stroke-width="1.4"/>
<rect x="895" y="9.6" width="6" height="2" fill="#000"/>
<path d="M911.4,4.6h4.2v3.6h-4.2z M909.4,7.2h4.2v4.2h-4.2z" fill="#d6d2ca" stroke="#000" stroke-width="1.1"/><path d="M911.4,4.7h4.2M909.4,7.3h4.2" stroke="#000" stroke-width="1.6"/>
<path d="M926.2,4.8L932.8,10.8M932.8,4.8L926.2,10.8" stroke="#000" stroke-width="1.7"/>
<rect x="884.3" y="70.4" width="13.5" height="11.8" fill="#d6d2ca"/><path d="M884.8,81.6V70.9H897.2" fill="none" stroke="#fff" stroke-width="1.1"/><path d="M897.2,70.6V81.6H884.5" fill="none" stroke="#505050" stroke-width="1.4"/>
<rect x="898.6" y="70.4" width="14.0" height="11.8" fill="#d6d2ca"/><path d="M899.1,81.6V70.9H912.0" fill="none" stroke="#fff" stroke-width="1.1"/><path d="M912.0,70.6V81.6H898.8" fill="none" stroke="#505050" stroke-width="1.4"/>
<rect x="914.8" y="70.4" width="14.6" height="11.8" fill="#d6d2ca"/><path d="M915.3,81.6V70.9H928.8" fill="none" stroke="#fff" stroke-width="1.1"/><path d="M928.8,70.6V81.6H915.0" fill="none" stroke="#505050" stroke-width="1.4"/>
<rect x="887.6" y="77.8" width="5.4" height="2" fill="#000"/>
<rect x="902" y="72.6" width="7.4" height="7" fill="none" stroke="#000" stroke-width="1.1"/><path d="M901.6,73h8.2" stroke="#000" stroke-width="1.8"/>
<path d="M919,73.4L925.2,79.4M925.2,73.4L919,79.4" stroke="#000" stroke-width="1.6"/>
<defs><clipPath id="icoclip"><path d="M8.3,14.5L14.2,1H22.4L19.8,14.5Z"/></clipPath></defs>
<g clip-path="url(#icoclip)"><rect x="7" y="0" width="17" height="16" fill="#4a9020"/><path d="M10,14L14,4.5L15.8,4.5L12.2,14Z" fill="#f0f020"/><path d="M14.6,1H22.4V6L18,6.5L14.6,5Z" fill="#e01820"/><path d="M15.6,5L19.4,5L18.4,9L15.4,8.6Z" fill="#a01030"/><path d="M14.2,8L17.6,8.6L17,11.4H13.6Z" fill="#f09010"/><path d="M22,3.4L17,12.4L19.6,12.4L23,4Z" fill="#f8f018"/><path d="M22.4,5L20,14.5L18.6,14.5L19.4,11Z" fill="#c81828"/><path d="M8,12.4H20V14.5H8Z" fill="#e8e8c0" opacity="0.85"/><path d="M11,13.4H13M15.4,13.4H17.4" stroke="#181810" stroke-width="1.1"/></g>
<path d="M8.5,14.2L14.3,1.2" stroke="#f0f0f0" stroke-width="1.1" stroke-dasharray="1 1"/><path d="M19.5,12V14.6" stroke="#e8e8f0" stroke-width="0.9"/>
<rect x="12.3" y="71" width="10" height="10.6" fill="#e81010"/><rect x="12.3" y="70.6" width="10" height="1.6" fill="#f0c020"/><rect x="20.9" y="71" width="1.4" height="10.6" fill="#b02010"/>
<rect x="12" y="88.2" width="10.2" height="11" fill="#10e020"/><path d="M13.8,93.6L16.4,96.6L20.6,90.4" fill="none" stroke="#103010" stroke-width="1.4"/>
</g>
<!--/CHROME-->
<!--STATUS-->
<g id="statusicons" font-family="Liberation Sans, sans-serif">
<rect x="583.8" y="684.2" width="18.2" height="14.1" fill="#d4d0c8"/><path d="M584.3,698.3V684.7H602.0" fill="none" stroke="#8c8a84" stroke-width="1"/><path d="M602.4,684.2V698.3" fill="none" stroke="#fff" stroke-width="1.2"/>
<rect x="589" y="688" width="6.8" height="8.4" fill="#dcdad4" stroke="#101010" stroke-width="1.2"/>
<rect x="604.4" y="684.2" width="28.0" height="14.1" fill="#d4d0c8"/><path d="M604.9,698.3V684.7H632.4" fill="none" stroke="#8c8a84" stroke-width="1"/><path d="M632.8,684.2V698.3" fill="none" stroke="#fff" stroke-width="1.2"/>
<rect x="605" y="685" width="27" height="13" fill="#fb0d0d"/>
<rect x="635.2" y="684.2" width="55.4" height="14.1" fill="#cccac6"/><path d="M635.7,698.3V684.7H690.6" fill="none" stroke="#8c8a84" stroke-width="1"/><path d="M691.0,684.2V698.3" fill="none" stroke="#fff" stroke-width="1.2"/>
<path d="M644.5,691L652.0,698.4H637.0Z" fill="#f01010" stroke="#202020" stroke-width="0.8"/><rect x="639.5" y="685.6" width="10" height="4.8" fill="#d01818" stroke="#202020" stroke-width="1"/>
<path d="M661.9,691L669.4,698.4H654.4Z" fill="#10f020" stroke="#202020" stroke-width="0.8"/><rect x="656.9" y="685.6" width="10" height="4.8" fill="#20e030" stroke="#202020" stroke-width="1"/>
<path d="M679.4,691L686.9,698.4H671.9Z" fill="#f8f820" stroke="#202020" stroke-width="0.8"/><rect x="674.4" y="685.6" width="10" height="4.8" fill="#f0f030" stroke="#202020" stroke-width="1"/>
<rect x="693.6" y="684.2" width="48.7" height="14.1" fill="#d4d0c8"/><path d="M694.1,698.3V684.7H742.3" fill="none" stroke="#8c8a84" stroke-width="1"/><path d="M742.7,684.2V698.3" fill="none" stroke="#fff" stroke-width="1.2"/>
<rect x="696.4" y="689.2" width="12.4" height="6" fill="#f0f030" stroke="#202020" stroke-width="1.1"/><path d="M699.0,692.2H703.6" stroke="#202020" stroke-width="1"/><rect x="705.4" y="691.6" width="1.4" height="1.4" fill="#202020"/>
<rect x="710.6" y="689.2" width="13.0" height="6" fill="#20e030" stroke="#202020" stroke-width="1.1"/><path d="M713.2,692.2H717.8" stroke="#202020" stroke-width="1"/><rect x="720.2" y="691.6" width="1.4" height="1.4" fill="#202020"/>
<rect x="725.2" y="689.2" width="13.2" height="6" fill="#20e030" stroke="#202020" stroke-width="1.1"/><path d="M727.8,692.2H732.4" stroke="#202020" stroke-width="1"/><rect x="735.0" y="691.6" width="1.4" height="1.4" fill="#202020"/>
<rect x="744.9" y="684.2" width="20.1" height="14.1" fill="#cccac6"/><path d="M745.4,698.3V684.7H765.0" fill="none" stroke="#8c8a84" stroke-width="1"/><path d="M765.4,684.2V698.3" fill="none" stroke="#fff" stroke-width="1.2"/>
<path d="M754.5,685.4L761.8,698.4H747.2Z" fill="#28e030" stroke="#185020" stroke-width="1"/><path d="M750.4,693.4H758.6" stroke="#d8d8d0" stroke-width="1.6"/><path d="M752.6,689.6H756.4" stroke="#185020" stroke-width="0.8"/>
<rect x="768.3" y="684.2" width="32.2" height="14.1" fill="#d4d0c8"/><path d="M768.8,698.3V684.7H800.5" fill="none" stroke="#8c8a84" stroke-width="1"/><path d="M800.9,684.2V698.3" fill="none" stroke="#fff" stroke-width="1.2"/>
<path d="M769.8,691.9L775.4,687.6V696.2Z" fill="#000"/><path d="M793.4,691.9L798.4,687.6V696.2Z" fill="#000"/>
<circle cx="779.2" cy="691.9" r="3.5" fill="#f8f010" stroke="#202000" stroke-width="0.9"/><circle cx="789.2" cy="691.9" r="3.5" fill="#f8f010" stroke="#202000" stroke-width="0.9"/>
<rect x="804.7" y="684.2" width="16.6" height="14.1" fill="#d4d0c8"/><path d="M805.2,698.3V684.7H821.3" fill="none" stroke="#8c8a84" stroke-width="1"/><path d="M821.7,684.2V698.3" fill="none" stroke="#fff" stroke-width="1.2"/>
<polygon points="818.5,693.9 815.1,697.3 810.3,697.3 806.9,693.9 806.9,689.1 810.3,685.7 815.1,685.7 818.5,689.1" fill="#70e078" stroke="#104018" stroke-width="1.1"/>
<rect x="824.2" y="684.2" width="16.8" height="14.1" fill="#d4d0c8"/><path d="M824.7,698.3V684.7H841.0" fill="none" stroke="#8c8a84" stroke-width="1"/><path d="M841.4,684.2V698.3" fill="none" stroke="#fff" stroke-width="1.2"/>
<rect x="826.4" y="685.8" width="12.2" height="12.2" rx="2.4" fill="#f8f878" stroke="#202010" stroke-width="1.1"/><path d="M835.4,693.8L837,692.4" stroke="#202010" stroke-width="1.2"/>
<rect x="845.8" y="684.2" width="17.4" height="14.1" fill="#c4c2be"/><path d="M846.3,698.3V684.7H863.2" fill="none" stroke="#8c8a84" stroke-width="1"/><path d="M863.6,684.2V698.3" fill="none" stroke="#fff" stroke-width="1.2"/>
<path d="M854.3,685.4L860.6,691.8L854.3,698.2L848,691.8Z" fill="#fff"/>
<rect x="865.6" y="684.2" width="4.8" height="14.1" fill="#d4d0c8"/><path d="M866.1,698.3V684.7H870.4" fill="none" stroke="#8c8a84" stroke-width="1"/><path d="M870.8,684.2V698.3" fill="none" stroke="#fff" stroke-width="1.2"/>
<rect x="873.5" y="684.2" width="4.8" height="14.1" fill="#d4d0c8"/><path d="M874.0,698.3V684.7H878.3" fill="none" stroke="#8c8a84" stroke-width="1"/><path d="M878.7,684.2V698.3" fill="none" stroke="#fff" stroke-width="1.2"/>
<rect x="881.4" y="684.2" width="4.2" height="14.1" fill="#d4d0c8"/><path d="M881.9,698.3V684.7H885.6" fill="none" stroke="#8c8a84" stroke-width="1"/><path d="M886.0,684.2V698.3" fill="none" stroke="#fff" stroke-width="1.2"/>
<rect x="888.6" y="685" width="47" height="13.4" fill="#dcd4cc"/>
<text transform="translate(912.2,696.6) scale(1.27,1)" text-anchor="middle" font-weight="bold" font-size="12.2" fill="#f00c0c" stroke="#f00c0c" stroke-width="0.9" letter-spacing="0.5">LAND</text>
</g>
<!--/STATUS-->
</svg>
</div>
</body>
</html>
